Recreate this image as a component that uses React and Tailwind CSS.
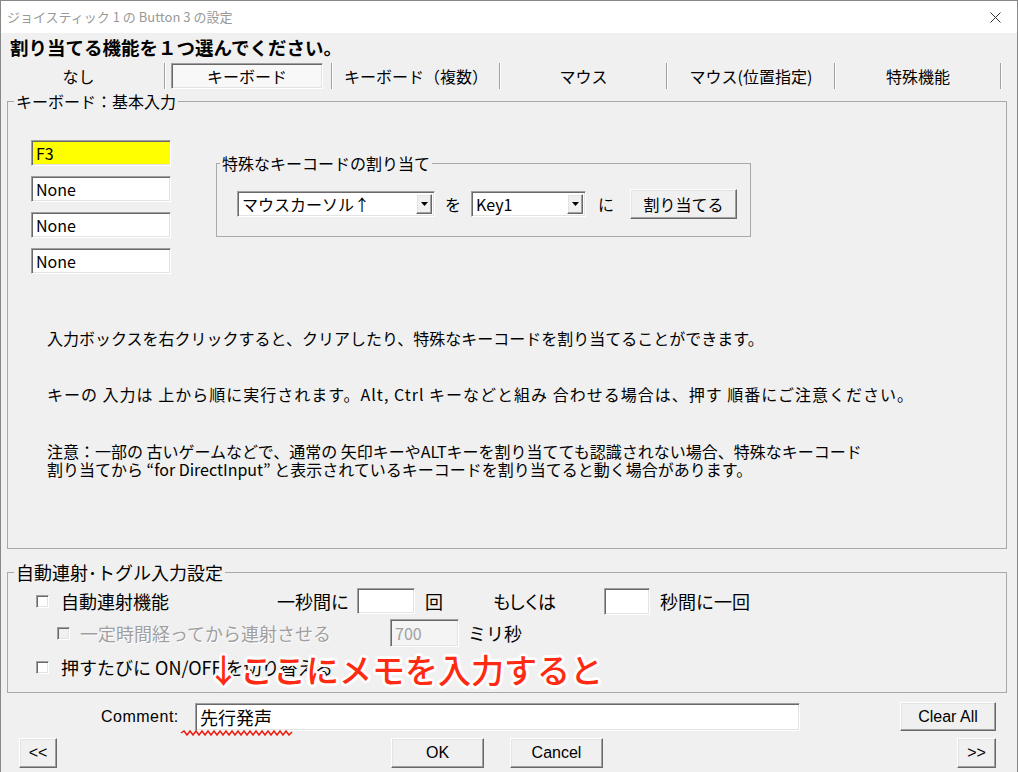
import React from 'react';

const sunken =
  'border border-t-[#a0a0a0] border-l-[#a0a0a0] border-b-white border-r-white shadow-[inset_1px_1px_0_#696969,inset_-1px_-1px_0_#e3e3e3]';
const raised =
  'border border-t-white border-l-white border-b-[#696969] border-r-[#696969] shadow-[inset_-1px_-1px_0_#a0a0a0,inset_1px_1px_0_#e3e3e3] bg-[#f0f0f0]';

const Btn = ({ className = '', children }) => (
  <button type="button" className={`${raised} flex items-center justify-center text-[16px] leading-none text-black ${className}`}>
    {children}
  </button>
);

const Field = ({ className = '', children }) => (
  <div className={`${sunken} flex items-center pl-[4px] text-[16px] leading-none ${className}`}>{children}</div>
);

const Check = ({ disabled }) => (
  <span className={`${sunken} block w-[13px] h-[13px] shrink-0 ${disabled ? 'bg-[#f0f0f0]' : 'bg-white'}`} />
);

const Select = ({ value, className = '' }) => (
  <div className={`${sunken} bg-white flex items-center justify-between h-[26px] p-[2px] ${className}`}>
    <span className="pl-[2px] text-[16px] leading-none">{value}</span>
    <span className={`${raised} w-[16px] h-full flex items-center justify-center`}>
      <svg width="7" height="4" viewBox="0 0 7 4">
        <path d="M0 0h7L3.5 4z" fill="#000" />
      </svg>
    </span>
  </div>
);

const Sep = () => <div className="w-[2px] h-[26px] border-l border-l-[#a0a0a0] border-r border-r-white" />;

const tabText = 'flex items-center justify-center h-[26px] text-[16px]';

export default function App() {
  return (
    <div className="relative w-[1018px] h-[772px] overflow-hidden border border-[#888888] border-b-0 bg-[#f0f0f0] text-black font-['Noto_Sans_CJK_JP',sans-serif]">
      {/* title bar */}
      <div className="h-[32px] bg-white flex items-center justify-between pl-[6px]">
        <span className="text-[13px] text-[#999999]">ジョイスティック 1 の Button 3 の設定</span>
        <div className="w-[44px] h-full flex items-center justify-center">
          <svg width="11" height="11" viewBox="0 0 11 11">
            <path d="M0.5 0.5l10 10M10.5 0.5l-10 10" stroke="#333" strokeWidth="1" />
          </svg>
        </div>
      </div>

      <div className="h-[28px] leading-[28px] pl-[9px] text-[18.5px] font-bold">割り当てる機能を１つ選んでください。</div>

      {/* tabs */}
      <div className="h-[30px] flex items-center">
        <div className={`${tabText} w-[163px] pr-[8px]`}>なし</div>
        <Sep />
        <div className="w-[165px] flex items-center pl-[5px]">
          <div className={`${sunken} ${tabText} w-[152px] bg-[#f8f8f8]`}>キーボード</div>
        </div>
        <Sep />
        <div className={`${tabText} w-[166px]`}>キーボード（複数）</div>
        <Sep />
        <div className={`${tabText} w-[165px]`}>マウス</div>
        <Sep />
        <div className={`${tabText} w-[166px]`}>マウス(位置指定)</div>
        <Sep />
        <div className={`${tabText} w-[164px]`}>特殊機能</div>
        <Sep />
      </div>

      {/* keyboard group */}
      <fieldset className="mt-[1px] ml-[6px] w-[1000px] h-[457px] border border-[#a9a9a9]">
        <legend className="ml-[6px] px-[2px] text-[16px] leading-[18px]">キーボード：基本入力</legend>
        <div className="flex items-start mt-[30px] pl-[23px]">
          <div className="flex flex-col gap-[10px]">
            <Field className="w-[140px] h-[26px] bg-[#ffff00]">F3</Field>
            <Field className="w-[140px] h-[26px] bg-white">None</Field>
            <Field className="w-[140px] h-[26px] bg-white">None</Field>
            <Field className="w-[140px] h-[26px] bg-white">None</Field>
          </div>
          <fieldset className="ml-[45px] mt-[14px] w-[535px] h-[83px] border border-[#a9a9a9]">
            <legend className="ml-[3px] px-[2px] text-[16px] leading-[18px]">特殊なキーコードの割り当て</legend>
            <div className="flex items-center mt-[17px] pl-[20px] h-[30px]">
              <Select value="マウスカーソル↑" className="w-[198px]" />
              <span className="w-[36px] text-center text-[16px]">を</span>
              <Select value="Key1" className="w-[115px]" />
              <span className="w-[40px] text-center text-[16px]">に</span>
              <Btn className="ml-[4px] w-[107px] h-[30px]">割り当てる</Btn>
            </div>
          </fieldset>
        </div>
        <div className="pl-[39px] text-[16px] leading-[18px]">
          <p className="mt-[55px]">入力ボックスを右クリックすると、クリアしたり、特殊なキーコードを割り当てることができます。</p>
          <p className="mt-[38px] tracking-[1px]">キーの 入力は 上から順に実行されます。Alt, Ctrl キーなどと組み 合わせる場合は、押す 順番にご注意ください。</p>
          <p className="mt-[39px]">
            注意：一部の 古いゲームなどで、通常の 矢印キーやALTキーを割り当てても認識されない場合、特殊なキーコード
            <br />
            割り当てから “for DirectInput” と表示されているキーコードを割り当てると動く場合があります。
          </p>
        </div>
      </fieldset>

      {/* auto-fire group */}
      <fieldset className="mt-[14px] ml-[6px] w-[1000px] h-[130px] border border-[#a9a9a9]">
        <legend className="ml-[6px] px-[2px] text-[18px] leading-[18px]">自動連射･トグル入力設定</legend>
        <div className="flex items-center mt-[7px] h-[26px] pl-[28px] text-[18px]">
          <Check />
          <span className="ml-[12px] w-[216px]">自動連射機能</span>
          <span className="w-[80px]">一秒間に</span>
          <Field className="w-[58px] h-[26px] bg-white" />
          <span className="ml-[10px] w-[68px]">回</span>
          <span className="w-[111px] tracking-[-3px]">もしくは</span>
          <Field className="w-[46px] h-[27px] bg-white" />
          <span className="ml-[10px]">秒間に一回</span>
        </div>
        <div className="flex items-center mt-[5px] h-[28px] pl-[49px] text-[18px]">
          <Check disabled />
          <span className="ml-[10px] w-[310px] text-[#a0a0a0] [text-shadow:1px_1px_0_#fff]">一定時間経ってから連射させる</span>
          <Field className="w-[69px] h-[28px] bg-[#f4f4f4] text-[#a0a0a0]">700</Field>
          <span className="ml-[9px]">ミリ秒</span>
        </div>
        <div className="flex items-center mt-[8px] h-[24px] pl-[28px] text-[18px]">
          <Check />
          <span className="ml-[12px]">押すたびに ON/OFF を切り替える</span>
        </div>
      </fieldset>

      {/* comment row */}
      <div className="flex items-center mt-[9px] h-[29px]">
        <span className="ml-[100px] w-[94px] text-[16px] tracking-[0.5px] font-['Liberation_Sans',sans-serif]">Comment:</span>
        <Field className="w-[605px] h-[28px] bg-white text-[18px]">先行発声</Field>
        <Btn className="ml-[100px] w-[96px] h-[29px] font-['Liberation_Sans',sans-serif]">Clear All</Btn>
      </div>

      {/* bottom buttons */}
      <div className="flex items-center mt-[7px] h-[30px] font-['Liberation_Sans',sans-serif]">
        <Btn className="ml-[18px] w-[38px] h-[30px]">&lt;&lt;</Btn>
        <Btn className="ml-[334px] w-[93px] h-[30px]">OK</Btn>
        <Btn className="ml-[26px] w-[93px] h-[30px]">Cancel</Btn>
        <Btn className="ml-[354px] w-[39px] h-[30px]">&gt;&gt;</Btn>
      </div>

      {/* annotation overlay */}
      <div className="absolute left-[206px] top-[651px] text-[33px] leading-[34px] font-medium text-[#ff2a12] whitespace-nowrap [text-shadow:-2px_-2px_0_#fff,2px_-2px_0_#fff,-2px_2px_0_#fff,2px_2px_0_#fff,0_3px_0_#fff,0_-3px_0_#fff,3px_0_0_#fff,-3px_0_0_#fff]">
        ↓ここにメモを入力すると
      </div>
      <svg className="absolute left-[179px] top-[729px]" width="114" height="6" viewBox="0 0 114 6">
        <path
          d="M1 3 L4 1 L7 5 L10 1 L13 5 L16 1 L19 5 L22 1 L25 5 L28 1 L31 5 L34 1 L37 5 L40 1 L43 5 L46 1 L49 5 L52 1 L55 5 L58 1 L61 5 L64 1 L67 5 L70 1 L73 5 L76 1 L79 5 L82 1 L85 5 L88 1 L91 5 L94 1 L97 5 L100 1 L103 5 L106 1 L109 5 L112 2"
          stroke="#ee1c10"
          strokeWidth="1.5"
          fill="none"
        />
      </svg>
    </div>
  );
}
